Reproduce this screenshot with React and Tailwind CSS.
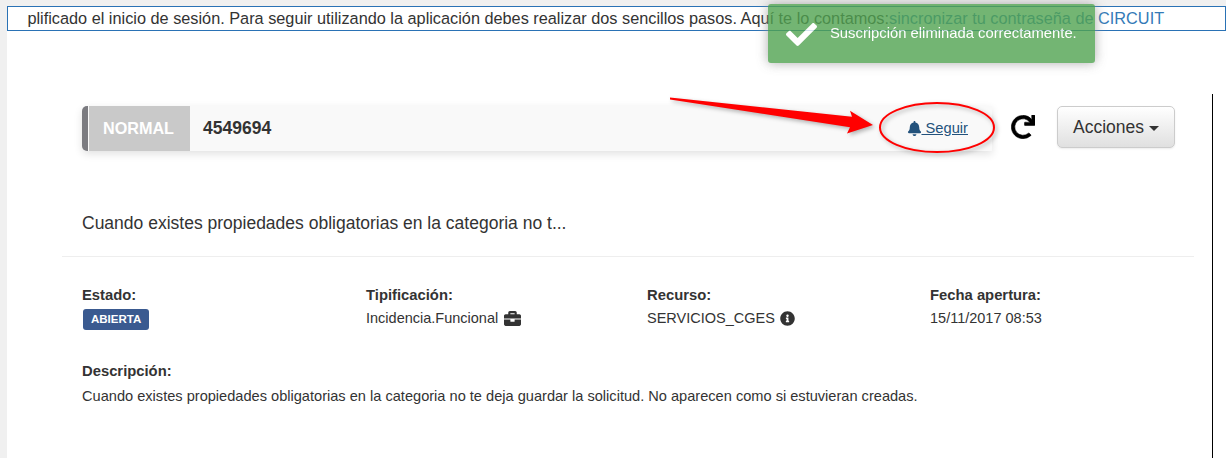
import { FaBell, FaBriefcase, FaCheck, FaInfoCircle, FaRedo } from "react-icons/fa";

const fields = [
  { label: "Estado:", badge: "ABIERTA" },
  { label: "Tipificación:", value: "Incidencia.Funcional", icon: <FaBriefcase size={17} className="ml-[6px]" /> },
  { label: "Recurso:", value: "SERVICIOS_CGES", icon: <FaInfoCircle size={15} className="ml-[5px]" /> },
  { label: "Fecha apertura:", value: "15/11/2017 08:53" },
];

function Notice() {
  return (
    <div className="h-[25px] border border-[#2a72b5] bg-white pl-[19px]">
      <div className="overflow-hidden whitespace-nowrap text-[16.3px] leading-[23px] text-[#333]">
        <span className="-ml-[81px] inline-block">
          Hemos simplificado el inicio de sesión. Para seguir utilizando la aplicación debes realizar dos sencillos pasos. Aquí te lo contamos:
          <a className="text-[#337ab7]">sincronizar tu contraseña de CIRCUIT</a>
        </span>
      </div>
    </div>
  );
}

function TicketBar() {
  return (
    <div className="flex items-start pl-[20px] pr-[18px]">
      <div className="flex h-[45px] w-[910px] items-stretch rounded-l-[5px] border-l-[6px] border-[#7b7b80] bg-[#f9f9f9] shadow-[0_3px_8px_rgba(0,0,0,0.12)]">
        <div className="ml-px flex w-[101px] items-center justify-center bg-[#c9c9c9] pr-[2px] text-[16.2px] font-bold text-white">NORMAL</div>
        <div className="flex items-center pl-[13px] text-[17.5px] font-bold text-[#333]">4549694</div>
        <a className="ml-auto mr-[24px] flex items-center text-[14.7px] text-[#23527c] underline">
          <FaBell size={15} className="-mr-px" />
          <span className="whitespace-pre"> Seguir</span>
        </a>
      </div>
      <FaRedo size={24} stroke="currentColor" strokeWidth={12} className="ml-[19px] mt-[9px] text-black" />
      <button className="ml-[22px] flex h-[42px] w-[118px] items-center justify-center rounded-[5px] border border-[#ccc] bg-gradient-to-b from-white to-[#e0e0e0] text-[17.5px] text-[#333] shadow-[0_1px_2px_rgba(0,0,0,0.08)]">
        Acciones
        <span className="ml-[5px] mt-[2px] border-x-[5px] border-t-[5px] border-x-transparent border-t-[#333]" />
      </button>
    </div>
  );
}

export default function App() {
  return (
    <div className="relative h-[458px] w-[1226px] overflow-hidden bg-[#f0f0f0] pl-[7px] pt-[6px] font-['Liberation_Sans',Arial,sans-serif] text-[14.5px] text-[#333]">
      <div className="h-full bg-white">
        <Notice />
        <main className="mt-[63px] h-[364px] w-[1206px] border-r border-black pl-[55px] pr-[18px] pt-[12px]">
          <TicketBar />
          <h2 className="mt-[60px] pl-[20px] text-[17.5px] leading-[24px]">Cuando existes propiedades obligatorias en la categoria no t...</h2>
          <hr className="mt-[21px] border-[#eee]" />
          <div className="grid grid-cols-[284px_281px_283px_1fr] pl-[20px] pt-[28px]">
            {fields.map((field) => (
              <div key={field.label}>
                <div className="text-[14.8px] font-bold leading-[20px]">{field.label}</div>
                {field.badge ? (
                  <span className="ml-px mt-[4px] inline-block rounded-[3px] bg-[#3a5a90] px-[8px] text-[11.5px] font-bold leading-[21px] text-white">{field.badge}</span>
                ) : (
                  <div className="mt-[3px] flex items-center leading-[20px]">
                    {field.value}
                    {field.icon}
                  </div>
                )}
              </div>
            ))}
          </div>
          <div className="pl-[20px] pt-[31px]">
            <div className="text-[14.8px] font-bold leading-[20px]">Descripción:</div>
            <p className="mt-[5px] text-[14.6px] leading-[20px]">Cuando existes propiedades obligatorias en la categoria no te deja guardar la solicitud. No aparecen como si estuvieran creadas.</p>
          </div>
        </main>
      </div>

      {/* toast */}
      <div className="absolute left-[768px] top-[4px] flex h-[59px] w-[327px] rounded-[3px] bg-[#51a351] pl-[18px] pt-[18px] text-white opacity-80 shadow-[0_0_12px_#999]">
        <FaCheck size={31} className="-mt-[3px]" />
        <span className="ml-[13px] mt-px text-[14.8px] leading-[21px]">Suscripción eliminada correctamente.</span>
      </div>

      {/* hand-drawn annotation */}
      <svg className="absolute left-0 top-0" width="1226" height="458" fill="none">
        <polygon points="670,97.5 852,116.7 850,110.7 873,125 847,133.5 850,127.3 670,99.5" fill="#f00" style={{ filter: "drop-shadow(2px 2px 2px rgba(0,0,0,0.3))" }} />
        <ellipse cx="937" cy="127.5" rx="57" ry="24.5" stroke="#f00" strokeWidth="2" style={{ filter: "drop-shadow(2px 2px 2px rgba(0,0,0,0.3))" }} />
      </svg>
    </div>
  );
}
